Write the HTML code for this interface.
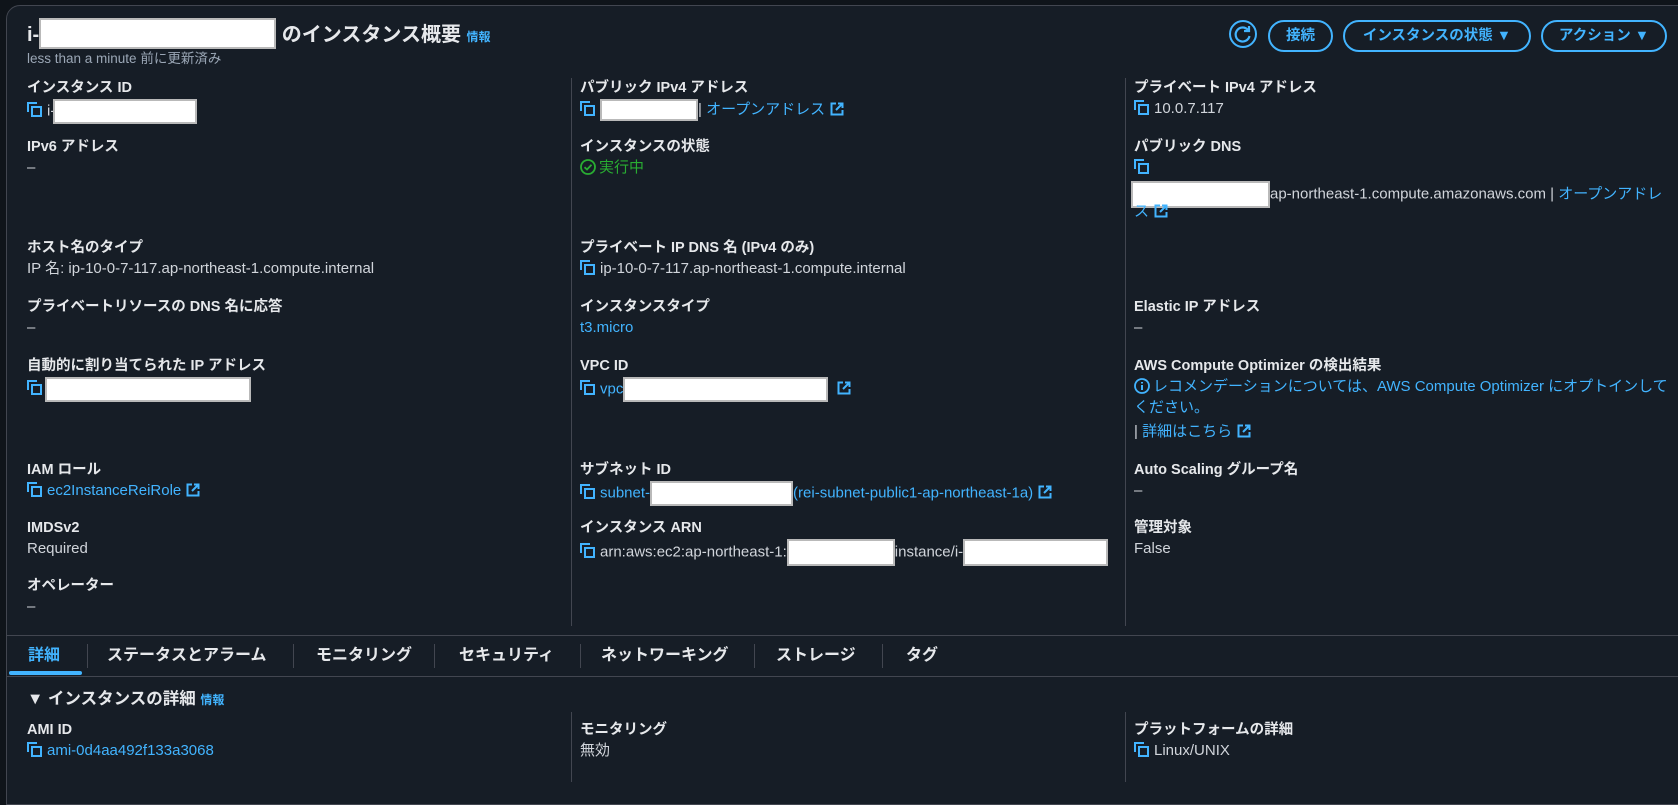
<!DOCTYPE html>
<html><head><meta charset="utf-8"><style>
*{margin:0;padding:0;box-sizing:border-box}
body{width:1678px;height:776px;background:#0f141a;overflow:hidden;font-family:"Liberation Sans","Noto Sans CJK JP",sans-serif;color:#d1d5db;font-size:15px;position:relative}
.panel{position:absolute;left:6px;top:5px;width:1680px;height:800px;background:#161d26;border:1px solid #424650;border-radius:14px 0 0 0}
.a{position:absolute;white-space:nowrap;line-height:20px}
.l{font-weight:bold;color:#e6e8eb;font-size:14.5px}
.lk{color:#42b4ff}
.r{display:inline-block;background:#fff;border:2px solid #b9b9b9;vertical-align:middle;height:25px}
.vd{position:absolute;width:1px;background:#424650}
.hd{position:absolute;height:1px;background:#424650}
.cp{display:inline-block;width:15px;height:15px;vertical-align:-2px;margin-right:5px}
.ex{display:inline-block;width:14px;height:14px;vertical-align:-2px;margin-left:5px}
.btn{position:absolute;top:20px;height:32px;border:2px solid #42b4ff;border-radius:16px;color:#42b4ff;font-weight:bold;font-size:14.5px;line-height:28px;text-align:center}
.tab{position:absolute;top:646px;font-weight:bold;font-size:16px;color:#e6e8eb;line-height:20px}
.ts{position:absolute;top:644px;width:1px;height:24px;background:#424650}
</style></head><body>
<svg width="0" height="0" style="position:absolute"><defs>
<symbol id="c" viewBox="0 0 15 15"><path d="M1 10 V1 H10" fill="none" stroke="#42b4ff" stroke-width="2"/><rect x="5" y="5" width="9" height="9" fill="none" stroke="#42b4ff" stroke-width="2"/></symbol>
<symbol id="e" viewBox="0 0 14 14"><path d="M6 1.5 H1.5 V12.5 H12.5 V8" fill="none" stroke="#42b4ff" stroke-width="2"/><path d="M6 8 L12.5 1.5 M8 1.5 H12.5 V6" fill="none" stroke="#42b4ff" stroke-width="2"/></symbol>
</defs></svg>
<div class="panel"></div>
<div class="a l" style="left:27px;top:18px;font-size:20px;line-height:30px">i-<span class="r" style="width:237px;height:31px;vertical-align:-8px"></span> のインスタンス概要 <span class="lk" style="font-size:12px">情報</span></div>
<div class="a" style="left:27px;top:49px;color:#9ba7b6;font-size:13.5px">less than a minute 前に更新済み</div>

<svg style="position:absolute;left:1228px;top:19px" width="30" height="30" viewBox="0 0 30 30"><circle cx="15" cy="15" r="13" fill="none" stroke="#42b4ff" stroke-width="2"/><path d="M20 11 A7 7 0 1 0 21.5 17" fill="none" stroke="#42b4ff" stroke-width="2.2"/><path d="M21 7 L21 12 L16 12" fill="none" stroke="#42b4ff" stroke-width="2.2"/></svg>
<div class="btn" style="left:1268px;width:65px">接続</div>
<div class="btn" style="left:1343px;width:188px">インスタンスの状態 ▼</div>
<div class="btn" style="left:1541px;width:126px">アクション ▼</div>

<div class="vd" style="left:571px;top:78px;height:548px"></div>
<div class="vd" style="left:1125px;top:78px;height:548px"></div>

<!-- col1 -->
<div class="a l" style="left:27px;top:78px">インスタンス ID</div>
<div class="a" style="left:27px;top:99px"><svg class="cp"><use href="#c"/></svg>i-<span class="r" style="width:144px;margin-left:-2px"></span></div>
<div class="a l" style="left:27px;top:137px">IPv6 アドレス</div>
<div class="a" style="left:27px;top:158px">–</div>
<div class="a l" style="left:27px;top:238px">ホスト名のタイプ</div>
<div class="a" style="left:27px;top:259px">IP 名: ip-10-0-7-117.ap-northeast-1.compute.internal</div>
<div class="a l" style="left:27px;top:297px">プライベートリソースの DNS 名に応答</div>
<div class="a" style="left:27px;top:318px">–</div>
<div class="a l" style="left:27px;top:356px">自動的に割り当てられた IP アドレス</div>
<div class="a" style="left:27px;top:377px"><svg class="cp"><use href="#c"/></svg><span class="r" style="width:206px;margin-left:-2px"></span></div>
<div class="a l" style="left:27px;top:460px">IAM ロール</div>
<div class="a lk" style="left:27px;top:481px"><svg class="cp"><use href="#c"/></svg>ec2InstanceReiRole<svg class="ex"><use href="#e"/></svg></div>
<div class="a l" style="left:27px;top:518px">IMDSv2</div>
<div class="a" style="left:27px;top:539px">Required</div>
<div class="a l" style="left:27px;top:576px">オペレーター</div>
<div class="a" style="left:27px;top:597px">–</div>

<!-- col2 -->
<div class="a l" style="left:580px;top:78px">パブリック IPv4 アドレス</div>
<div class="a" style="left:580px;top:99px"><svg class="cp"><use href="#c"/></svg><span class="r" style="width:98px;height:22px"></span>| <span class="lk">オープンアドレス<svg class="ex"><use href="#e"/></svg></span></div>
<div class="a l" style="left:580px;top:137px">インスタンスの状態</div>
<div class="a" style="left:580px;top:158px;color:#29ad32"><svg width="16" height="16" style="vertical-align:-3px;margin-right:3px" viewBox="0 0 16 16"><circle cx="8" cy="8" r="7" fill="none" stroke="#29ad32" stroke-width="1.8"/><path d="M4.5 8.2 L7 10.5 L11.5 5.8" fill="none" stroke="#29ad32" stroke-width="1.8"/></svg>実行中</div>
<div class="a l" style="left:580px;top:238px">プライベート IP DNS 名 (IPv4 のみ)</div>
<div class="a" style="left:580px;top:259px"><svg class="cp"><use href="#c"/></svg>ip-10-0-7-117.ap-northeast-1.compute.internal</div>
<div class="a l" style="left:580px;top:297px">インスタンスタイプ</div>
<div class="a lk" style="left:580px;top:318px">t3.micro</div>
<div class="a l" style="left:580px;top:356px">VPC ID</div>
<div class="a lk" style="left:580px;top:377px"><svg class="cp"><use href="#c"/></svg>vpc<span class="r" style="width:205px"></span><svg class="ex" style="margin-left:9px"><use href="#e"/></svg></div>
<div class="a l" style="left:580px;top:460px">サブネット ID</div>
<div class="a lk" style="left:580px;top:481px"><svg class="cp"><use href="#c"/></svg>subnet-<span class="r" style="width:143px"></span>(rei-subnet-public1-ap-northeast-1a)<svg class="ex"><use href="#e"/></svg></div>
<div class="a l" style="left:580px;top:518px">インスタンス ARN</div>
<div class="a" style="left:580px;top:539px"><svg class="cp"><use href="#c"/></svg>arn:aws:ec2:ap-northeast-1:<span class="r" style="width:108px;height:27px"></span>instance/i-<span class="r" style="width:145px;height:27px"></span></div>

<!-- col3 -->
<div class="a l" style="left:1134px;top:78px">プライベート IPv4 アドレス</div>
<div class="a" style="left:1134px;top:99px"><svg class="cp"><use href="#c"/></svg>10.0.7.117</div>
<div class="a l" style="left:1134px;top:137px">パブリック DNS</div>
<div class="a" style="left:1134px;top:158px"><svg class="cp"><use href="#c"/></svg></div>
<div class="a" style="left:1131px;top:181px"><span class="r" style="width:139px;height:27px"></span>ap-northeast-1.compute.amazonaws.com | <span class="lk">オープンアドレ</span></div>
<div class="a lk" style="left:1134px;top:202px">ス<svg class="ex"><use href="#e"/></svg></div>
<div class="a l" style="left:1134px;top:297px">Elastic IP アドレス</div>
<div class="a" style="left:1134px;top:318px">–</div>
<div class="a l" style="left:1134px;top:356px">AWS Compute Optimizer の検出結果</div>
<div class="a lk" style="left:1134px;top:377px"><svg width="16" height="16" style="vertical-align:-3px;margin-right:3px" viewBox="0 0 16 16"><circle cx="8" cy="8" r="7" fill="none" stroke="#42b4ff" stroke-width="1.8"/><path d="M8 7 V12 M8 4 V5.5" stroke="#42b4ff" stroke-width="2"/></svg>レコメンデーションについては、AWS Compute Optimizer にオプトインして</div>
<div class="a lk" style="left:1134px;top:398px">ください。</div>
<div class="a" style="left:1134px;top:422px">| <span class="lk">詳細はこちら<svg class="ex"><use href="#e"/></svg></span></div>
<div class="a l" style="left:1134px;top:460px">Auto Scaling グループ名</div>
<div class="a" style="left:1134px;top:481px">–</div>
<div class="a l" style="left:1134px;top:518px">管理対象</div>
<div class="a" style="left:1134px;top:539px">False</div>

<!-- tabs -->
<div class="hd" style="left:6px;top:635px;width:1672px"></div>
<div class="tab" style="left:28px;color:#42b4ff">詳細</div>
<div style="position:absolute;left:9px;top:671px;width:73px;height:4px;border-radius:2px;background:#42b4ff"></div>
<div class="ts" style="left:87px"></div>
<div class="tab" style="left:107px">ステータスとアラーム</div>
<div class="ts" style="left:293px"></div>
<div class="tab" style="left:316px">モニタリング</div>
<div class="ts" style="left:434px"></div>
<div class="tab" style="left:459px">セキュリティ</div>
<div class="ts" style="left:580px"></div>
<div class="tab" style="left:601px">ネットワーキング</div>
<div class="ts" style="left:754px"></div>
<div class="tab" style="left:776px">ストレージ</div>
<div class="ts" style="left:882px"></div>
<div class="tab" style="left:906px">タグ</div>
<div class="hd" style="left:6px;top:676px;width:1672px"></div>

<div class="a l" style="left:27px;top:689px;font-size:16.5px">▼ インスタンスの詳細 <span class="lk" style="font-size:12px">情報</span></div>
<div class="vd" style="left:571px;top:712px;height:70px"></div>
<div class="vd" style="left:1125px;top:712px;height:70px"></div>
<div class="a l" style="left:27px;top:720px">AMI ID</div>
<div class="a lk" style="left:27px;top:741px"><svg class="cp"><use href="#c"/></svg>ami-0d4aa492f133a3068</div>
<div class="a l" style="left:580px;top:720px">モニタリング</div>
<div class="a" style="left:580px;top:741px">無効</div>
<div class="a l" style="left:1134px;top:720px">プラットフォームの詳細</div>
<div class="a" style="left:1134px;top:741px"><svg class="cp"><use href="#c"/></svg>Linux/UNIX</div>
</body></html>
